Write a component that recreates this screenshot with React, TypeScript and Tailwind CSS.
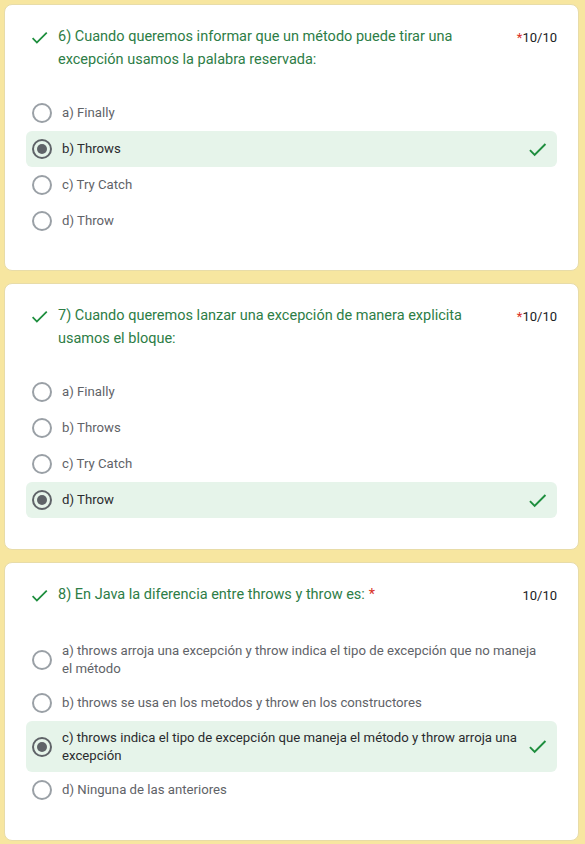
import React from "react";

interface Question {
  num: string;
  lines: string;
  starBefore: boolean;
  options: string[];
  correct: number;
}

const questions: Question[] = [
  {
    num: "6)",
    lines: "Cuando queremos informar que un método puede tirar una excepción usamos la palabra reservada:",
    starBefore: true,
    options: ["a) Finally", "b) Throws", "c) Try Catch", "d) Throw"],
    correct: 1,
  },
  {
    num: "7)",
    lines: "Cuando queremos lanzar una excepción de manera explicita usamos el bloque:",
    starBefore: true,
    options: ["a) Finally", "b) Throws", "c) Try Catch", "d) Throw"],
    correct: 3,
  },
  {
    num: "8)",
    lines: "En Java la diferencia entre throws y throw es:",
    starBefore: false,
    options: [
      "a) throws arroja una excepción y throw indica el tipo de excepción que no maneja el método",
      "b) throws se usa en los metodos y throw en los constructores",
      "c) throws indica el tipo de excepción que maneja el método y throw arroja una excepción",
      "d) Ninguna de las anteriores",
    ],
    correct: 2,
  },
];

function Check({ size }: { size: number }) {
  return (
    <svg width={size} height={size} viewBox="0 0 24 24" className="shrink-0">
      <path d="M9 16.17L4.83 12l-1.42 1.41L9 19 21 7l-1.41-1.41z" fill="#1e8e3e" />
    </svg>
  );
}

function Radio({ checked }: { checked: boolean }) {
  return (
    <div
      className={`w-[20px] h-[20px] rounded-full border-2 flex items-center justify-center shrink-0 ${
        checked ? "border-[#5f6368]" : "border-[#9aa0a6]"
      }`}
    >
      {checked && <div className="w-[10px] h-[10px] rounded-full bg-[#5f6368]" />}
    </div>
  );
}

function QuestionCard({ q, last }: { q: Question; last: boolean }) {
  const title = `${q.num} ${q.lines}`;
  return (
    <div
      className={`bg-white rounded-lg border border-[#e8dca8] px-[21px] pt-[20px] ${
        last ? "pb-[32px]" : "pb-[31px]"
      }`}
    >
      <div className={`flex items-start ${last ? "mb-[27px]" : "mb-[24px]"}`}>
        <div className="w-[32px] pl-[3px] pt-[2px] shrink-0">
          <Check size={21} />
        </div>
        <div className="flex-1 pr-[40px] text-[14.5px] leading-[23px] text-[#2d7d46]">
          <span>{title}</span>
          {!q.starBefore && <span className="text-[#d93025] ml-[4px]">*</span>}
        </div>
        <div className="text-[13px] leading-[23px] text-[#202124] pt-[1px] shrink-0">
          {q.starBefore && <span className="text-[#d93025]">*</span>}
          <span>10/10</span>
        </div>
      </div>
      <div className="flex flex-col">
        {q.options.map((opt, i) => {
          const sel = i === q.correct;
          return (
            <div
              key={i}
              className={`flex items-center min-h-[36px] py-[7.5px] pl-[6px] pr-[8px] rounded-md ${
                sel ? "bg-[#e6f4ea]" : ""
              }`}
            >
              <Radio checked={sel} />
              <div
                className={`flex-1 ml-[10px] text-[13.2px] leading-[18px] ${
                  sel ? "text-[#2a2b2e]" : "text-[#5f6368]"
                }`}
              >
                {opt}
              </div>
              {sel && (
                <div className="ml-[8px] -my-[4px] h-[24px] flex items-center">
                  <Check size={23} />
                </div>
              )}
            </div>
          );
        })}
      </div>
    </div>
  );
}

export default function App() {
  return (
    <div
      className="min-h-[844px] bg-[#f7e6a0] pl-[4px] pr-[6px] pt-[4px] pb-[6px] flex flex-col gap-[12px]"
      style={{ fontFamily: "Roboto, 'Liberation Sans', sans-serif" }}
    >
      {questions.map((q, i) => (
        <QuestionCard key={q.num} q={q} last={i === questions.length - 1} />
      ))}
    </div>
  );
}
